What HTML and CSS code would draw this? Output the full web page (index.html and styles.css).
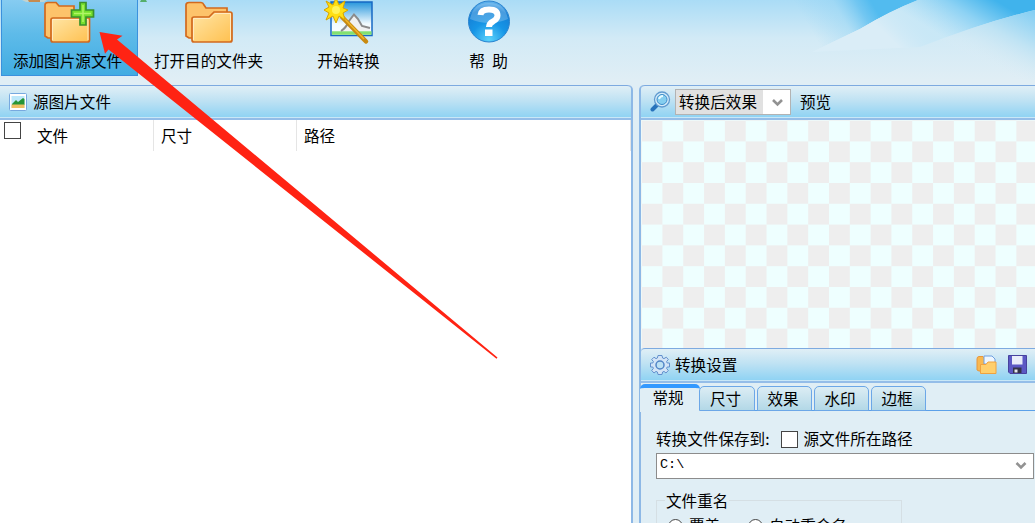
FILE: index.html
```
<!DOCTYPE html>
<html lang="zh-CN">
<head>
    <meta charset="UTF-8">
    <title>图片转换</title>
    <link rel="stylesheet" href="styles.css">
</head>
<body>
    <!-- 工具栏 -->
    <div class="toolbar">
        <svg class="swoosh" width="255" height="84" viewBox="780 0 255 84">
            <defs>
                <linearGradient id="sw1" gradientUnits="userSpaceOnUse" x1="815" y1="37" x2="872" y2="3">
                    <stop offset="0" stop-color="#8dd2f4" stop-opacity="0"/>
                    <stop offset="0.500" stop-color="#8dd2f4" stop-opacity="0.400"/>
                    <stop offset="0.800" stop-color="#6bc4f1" stop-opacity="0.900"/>
                    <stop offset="1" stop-color="#52bbef"/>
                </linearGradient>
                <linearGradient id="sw2" gradientUnits="userSpaceOnUse" x1="995" y1="0" x2="965" y2="50">
                    <stop offset="0" stop-color="#40b3ec"/>
                    <stop offset="0.450" stop-color="#8dd2f4"/>
                    <stop offset="1" stop-color="#d5ecf7"/>
                </linearGradient>
                <linearGradient id="sw3" gradientUnits="userSpaceOnUse" x1="1040" y1="12" x2="1008" y2="76">
                    <stop offset="0" stop-color="#80cdf3"/>
                    <stop offset="0.500" stop-color="#bfe3f4"/>
                    <stop offset="1" stop-color="#dfedf4" stop-opacity="0"/>
                </linearGradient>
                <linearGradient id="sw4" gradientUnits="userSpaceOnUse" x1="892" y1="40" x2="935" y2="-5">
                    <stop offset="0" stop-color="#daedf7"/>
                    <stop offset="1" stop-color="#a0daf5" stop-opacity="0"/>
                </linearGradient>
            </defs>
            <path d="M780 0H918Q890 11 860 29L812 52L780 66Z" fill="url(#sw1)"/>
            <path d="M918 0H1035V10Q985 22 920 47L812 52L860 29Q890 11 918 0Z" fill="url(#sw2)"/>
            <path d="M918 0H1035V10Q985 22 920 47L812 52L860 29Q890 11 918 0Z" fill="url(#sw4)"/>
            <path d="M1035 10Q985 22 920 47L960 80H1035Z" fill="url(#sw3)"/>
        </svg>
        <div class="tool active">
            <svg width="54" height="46" viewBox="1 0 54 46">
                <path d="M5 5Q5 2.500 8 2.500H16L19 6H34V38H8L5 36Z" fill="#fdc36b" stroke="#d2691e" stroke-width="1.700"/>
                <path d="M11 20Q11 18 13 18H49.500V40Q49.500 42 47.500 42H13Q11 42 11 40Z" fill="url(#folder)" stroke="#d2691e" stroke-width="1.700"/>
                <path d="M12.500 40V19.500H48V40" fill="none" stroke="#ffeac0"/>
                <path d="M40 2.500H46V10H53.500V17H46V25H40V17H31.500V10H40Z" fill="#76df2e" stroke="#3a922c" stroke-width="1.700"/>
                <path d="M43 5V22M34 13.500H51" stroke="#b1f566" stroke-width="1.500"/>
            </svg>
            <span>添加图片源文件</span>
        </div>
        <div class="tool">
            <svg width="54" height="46" viewBox="0 0 54 46">
                <defs>
                    <linearGradient id="folder" x1="0" y1="0" x2="1" y2="1">
                        <stop offset="0" stop-color="#ffe6a7"/>
                        <stop offset="1" stop-color="#ffc04f"/>
                    </linearGradient>
                </defs>
                <path d="M4 5Q4 2.500 7 2.500H19Q21 2.500 22 5L24 8H45V38H7L4 36Z" fill="#fdc36b" stroke="#d2691e" stroke-width="1.700"/>
                <path d="M10 19Q10 17 12 17H27L32 12H48Q50 12 50 14V40Q50 42 48 42H12Q10 42 10 40Z" fill="url(#folder)" stroke="#d2691e" stroke-width="1.700"/>
                <path d="M11.500 40V18.500H28L33 13.500H48.500V40" fill="none" stroke="#ffeac0"/>
            </svg>
            <span>打开目的文件夹</span>
        </div>
        <div class="tool">
            <svg width="54" height="46" viewBox="0 0 54 46">
                <defs>
                    <linearGradient id="sky" x1="0" y1="0" x2="0" y2="1">
                        <stop offset="0" stop-color="#2796dc"/>
                        <stop offset="0.650" stop-color="#f1fafe"/>
                        <stop offset="1" stop-color="#ffffff"/>
                    </linearGradient>
                </defs>
                <rect x="9" y="2" width="41" height="33.500" fill="url(#sky)" stroke="#1668c4" stroke-width="1.500"/>
                <path d="M10 33H49.500" stroke="#83e070" stroke-width="3.500"/>
                <path d="M19 31Q24 28 27 21L32 14.500L36 19L40 26L48 28V31Z" fill="#f1f1f1"/>
                <path d="M19 31Q24 28 27 21L32 14.500L36 19L40 26L48 28" fill="none" stroke="#8b8b8b" stroke-width="2"/>
                <path d="M20 17L44 41.500" stroke="#c98a10" stroke-width="4.500" stroke-linecap="round"/>
                <path d="M20 16L42 39" stroke="#efb52a" stroke-width="1.500"/>
                <path d="M14 -2L17 5L23 1L21 8L26 10L21 13L23 20L17 16L14 23L11 16L4 20L7 13L2 10L7 7L4 1L11 5Z" fill="#ffdf12" stroke="#d9a400"/>
                <circle cx="14" cy="10" r="4" fill="#fff45a"/>
            </svg>
            <span>开始转换</span>
        </div>
        <div class="tool">
            <svg width="54" height="46" viewBox="0 0 54 46">
                <defs>
                    <radialGradient id="ball" cx="0.500" cy="0.950" r="0.950">
                        <stop offset="0" stop-color="#5cd3fb"/>
                        <stop offset="0.450" stop-color="#1695e6"/>
                        <stop offset="0.800" stop-color="#1580d6"/>
                        <stop offset="1" stop-color="#6ab9ef"/>
                    </radialGradient>
                </defs>
                <circle cx="27" cy="21.500" r="20.500" fill="url(#ball)" stroke="#2a83cf"/>
                <path d="M8 19Q11 3 27 3T46 19Q27 27 8 19Z" fill="#ffffff" opacity="0.220"/>
                <path d="M18.500 15Q19 9.500 27 9.500Q35.500 9.500 35.500 15.500Q35.500 19 31 21.500Q27 23.500 27 27" fill="none" stroke="#ffffff" stroke-width="6"/>
                <rect x="23" y="29.500" width="7.500" height="6.500" fill="#ffffff"/>
            </svg>
            <span class="help-text">帮 助</span>
        </div>
        <svg class="cut-marks" width="150" height="4" viewBox="0 0 150 4">
            <path d="M22 0H47L44 2H26Z" fill="#c2d3cf"/>
            <path d="M28 0H40V2H29Z" fill="#c68b50"/>
            <path d="M141 0H146L147 2H140Z" fill="#55ae6b"/>
        </svg>
    </div>

    <div class="main">
        <!-- 源图片文件列表 -->
        <div class="panel source-panel">
            <div class="panel-header">
                <svg width="18" height="18" viewBox="0 0 18 18">
                    <rect x="0.500" y="0.500" width="17" height="17" rx="1" fill="#ffffff" stroke="#77a9df"/>
                    <rect x="2.500" y="3" width="13" height="12" fill="#bde8fa"/>
                    <path d="M3 11L7 7L9 9L14 5L15.500 6V12H3Z" fill="#269536"/>
                    <path d="M2.500 11.500H15.500V15H2.500Z" fill="#edc064"/>
                </svg>
                <span>源图片文件</span>
            </div>
            <div class="list-head">
                <div class="col col-file"><i class="checkbox"></i><span>文件</span></div>
                <div class="col col-size">尺寸</div>
                <div class="col col-path">路径</div>
            </div>
        </div>

        <div class="panel right-panel">
            <!-- 预览 -->
            <div class="panel-header preview-header">
                <svg width="21" height="21" viewBox="0 0 21 21">
                    <path d="M2.500 18.500L7 14" stroke="#2672bb" stroke-width="4" stroke-linecap="round"/>
                    <circle cx="12" cy="8.500" r="7.500" fill="#d7edfa" stroke="#619bd0" stroke-width="1.300"/>
                    <circle cx="12" cy="8.500" r="5" fill="#85ceef" stroke="#3d8bc9"/>
                    <path d="M9 8Q10 5 13 5" fill="none" stroke="#e7fbff" stroke-width="2"/>
                </svg>
                <div class="select">
                    <span class="select-value">转换后效果</span>
                    <svg width="27" height="23" viewBox="0 0 27 23">
                        <path d="M10 9L14.500 13.500L19 9" fill="none" stroke="#929292" stroke-width="2.600"/>
                    </svg>
                </div>
                <span>预览</span>
            </div>
            <div class="preview"></div>

            <!-- 转换设置 -->
            <div class="panel-header settings-header">
                <svg width="22" height="22" viewBox="0 0 22 22">
                    <path d="M9 1.500H13L13.600 4L15 4.600L17.300 3.200L19.300 5.500L17.600 7.600L18.200 9H20.500V13H18.200L17.600 14.400L19.300 16.500L17 19L15 17.400L13.600 18L13 20.500H9L8.400 18L7 17.400L5 19L2.700 16.500L4.400 14.400L3.800 13H1.500V9H3.800L4.400 7.600L2.700 5.500L5 3.200L7 4.600L8.400 4Z" fill="#d3e4f6" stroke="#6390cd" stroke-linejoin="round"/>
                    <circle cx="11" cy="11" r="4" fill="#bde1f3" stroke="#5285c6" stroke-width="1.500"/>
                </svg>
                <span>转换设置</span>
                <div class="header-actions">
                    <svg width="22" height="20" viewBox="0 0 22 20">
                        <path d="M1 4Q1 1.500 3 1.500H7L9 4H18V16H3L1 15Z" fill="#f8b850" stroke="#e8963a"/>
                        <path d="M8 8V1H16L19 4V9H8Z" fill="#eef6ff" stroke="#6e9fe0"/>
                        <path d="M4.500 9.500H10L12 7H20V18.500H4.500Z" fill="#ffcf6c" stroke="#f0a23f"/>
                    </svg>
                    <svg width="19" height="19" viewBox="0 0 19 19">
                        <path d="M0.500 0.500H18.500V18.500H2L0.500 17Z" fill="#5b58c4" stroke="#47429e"/>
                        <path d="M4 1H14.500V9.500H4Z" fill="#e9edfa"/>
                        <path d="M5 12.500H13.500V18H5Z" fill="#343449"/>
                        <path d="M6.500 14.500H9.500V17.500H6.500Z" fill="#e7e7ef"/>
                    </svg>
                </div>
            </div>
            <div class="tabs">
                <div class="tab selected">常规</div>
                <div class="tab">尺寸</div>
                <div class="tab">效果</div>
                <div class="tab">水印</div>
                <div class="tab">边框</div>
            </div>
            <div class="tab-body">
                <div class="save-row">
                    <span>转换文件保存到:</span>
                    <i class="checkbox"></i>
                    <span>源文件所在路径</span>
                </div>
                <div class="path-select">
                    <span>C:\</span>
                    <svg width="24" height="23" viewBox="0 0 24 23">
                        <path d="M7.500 9L12 13.500L16.500 9" fill="none" stroke="#929292" stroke-width="2.600"/>
                    </svg>
                </div>
                <fieldset class="rename">
                    <legend>文件重名</legend>
                    <label><i class="radio"></i>覆盖</label>
                    <label><i class="radio"></i>自动重命名</label>
                </fieldset>
            </div>
        </div>
    </div>

    <!-- 箭头标注 -->
    <svg class="arrow" width="1035" height="523" viewBox="0 0 1035 523">
        <path d="M99.500 32L122.500 35.700L117 39.500L497.500 357.500L496.500 358.700L108.500 49.500L105 53.700Z" fill="#ff2313"/>
    </svg>
</body>
</html>
```
FILE: styles.css
```
:root {
    --line: #8db8e6;
    --panel-bg: #e0eef5;
    --header-bg: linear-gradient(#e0eff6, #bfe2f3 45%, #8dd2f3);
}

* {
    box-sizing: border-box;
}

body {
    margin: 0;
    width: 1035px;
    height: 523px;
    overflow: hidden;
    position: relative;
    background-color: var(--panel-bg);
    color: #000;
    font-family: "Noto Sans CJK SC", sans-serif;
    font-size: 15.6px;
    line-height: 20px;
    white-space: nowrap;
}

svg {
    display: block;
    flex: none;
}

/* 工具栏 */
.toolbar {
    position: relative;
    height: 85px;
    display: flex;
    gap: 3px;
    padding-left: 1px;
    background: linear-gradient(#aadcf6, #d2eaf6 38px, #e0eef5 80px);
}

.swoosh {
    position: absolute;
    top: 0;
    right: 0;
}

.cut-marks {
    position: absolute;
    top: 0;
    left: 0;
}

.tool {
    width: 137px;
    height: 76px;
    display: flex;
    flex-direction: column;
    align-items: center;
    gap: 4px;
    padding-right: 2px;
    border: 1px solid transparent;
    border-top: none;
}

.tool.active {
    padding-right: 4px;
    background: linear-gradient(#86ccf1, #5ebbe9 45%, #41ace2);
    border-color: #3b91dd;
}

.help-text {
    word-spacing: 4px;
}

/* 面板 */
.main {
    display: flex;
    gap: 6px;
    height: 438px;
}

.source-panel {
    width: 633px;
    border-right: 2px solid var(--line);
    border-top-right-radius: 5px;
    background-color: #fff;
}

.right-panel {
    flex: 1;
    display: flex;
    flex-direction: column;
    border-left: 2px solid var(--line);
    border-top-left-radius: 5px;
}

.panel-header {
    height: 35px;
    flex: none;
    display: flex;
    align-items: center;
    padding-bottom: 1px;
    border-top: 1px solid #7daae0;
    border-bottom: 2px solid #94bde8;
    box-shadow: inset 0 -1px #c8e7f7;
    background: var(--header-bg);
}

.panel-header > span {
    margin-top: -1px;
}

.source-panel .panel-header {
    padding-left: 9px;
    gap: 6px;
    border-top-right-radius: 4px;
}

/* 文件列表表头 */
.list-head {
    display: flex;
    height: 31px;
    border-right: 1px solid #e5e5e5;
}

.col {
    padding: 5px 0 0 7px;
    border-left: 1px solid #e5e5e5;
}

.col-file {
    width: 153px;
    display: flex;
    align-items: flex-start;
    gap: 16px;
    padding-left: 4px;
    border-left: none;
}

.col-size {
    width: 143px;
}

.checkbox {
    width: 17px;
    height: 17px;
    flex: none;
    border: 1px solid #444;
    background-color: #fff;
}

.col-file .checkbox {
    margin-top: -3px;
}

/* 预览 */
.preview-header {
    padding-left: 9px;
    border-top-left-radius: 4px;
}

.select {
    display: flex;
    align-items: center;
    width: 116px;
    height: 26px;
    margin: 1px 9px 0 4px;
    border: 1px solid #b3b3b3;
    background-color: #fff;
}

.select-value {
    width: 88px;
    height: 24px;
    line-height: 22px;
    padding-left: 3px;
    background-color: #e1e1e1;
}

.preview {
    height: 228px;
    flex: none;
    background: conic-gradient(#eff 25%, #eee 0 50%, #eff 0 75%, #eee 0) 0.6px 0.6px / 41.65px 41.6px;
}

/* 转换设置 */
.settings-header {
    padding-left: 8px;
    gap: 4px;
    border-top-left-radius: 4px;
}

.header-actions {
    display: flex;
    gap: 10px;
    margin: 0 8px 0 auto;
}

.tabs {
    display: flex;
    gap: 2px;
    height: 28px;
    flex: none;
    padding-top: 3px;
    background: linear-gradient(#5ba0e9, #5ba0e9) 58px 27px no-repeat;
    margin-left: -1px;
}

.tab {
    width: 55px;
    height: 25px;
    line-height: 22px;
    padding-right: 3px;
    text-align: center;
    border: 1px solid #6ca7e7;
    border-radius: 5px 5px 0 0;
    background: linear-gradient(#dcedf4, #b3d8e7);
}

.tab.selected {
    width: 60px;
    height: 28px;
    margin: -2px -3px 0 0;
    line-height: 18px;
    padding-right: 4px;
    border: none;
    border-top: 4px solid #3399ff;
    background: var(--panel-bg);
}

.tab.selected + .tab {
    width: 56px;
}

.tab-body {
    padding: 17px 1px 0 15px;
}

.save-row {
    display: flex;
    align-items: center;
}

.save-row .checkbox {
    margin: 2px 6px 0 11px;
}

.path-select {
    display: flex;
    justify-content: space-between;
    height: 26px;
    margin-top: 5px;
    padding-left: 3px;
    border: 1px solid #8c8c8c;
    background-color: #fff;
    font: 13.5px/22px "Liberation Mono", monospace;
}

.rename {
    display: flex;
    width: 246px;
    height: 34px;
    margin: 11px 0 0;
    padding: 5px 0 0 11px;
    border: 1px solid #d5dfe4;
    border-bottom: none;
}

.rename legend {
    margin-left: -3px;
    padding: 0 1px;
}

.rename label {
    display: flex;
    gap: 6px;
    width: 80px;
}

.radio {
    width: 15px;
    height: 15px;
    flex: none;
    margin-top: 4px;
    border: 1px solid #444;
    border-radius: 50%;
    background-color: #fff;
}

/* 箭头标注 */
.arrow {
    position: absolute;
    top: 0;
    left: 0;
    pointer-events: none;
}
```
